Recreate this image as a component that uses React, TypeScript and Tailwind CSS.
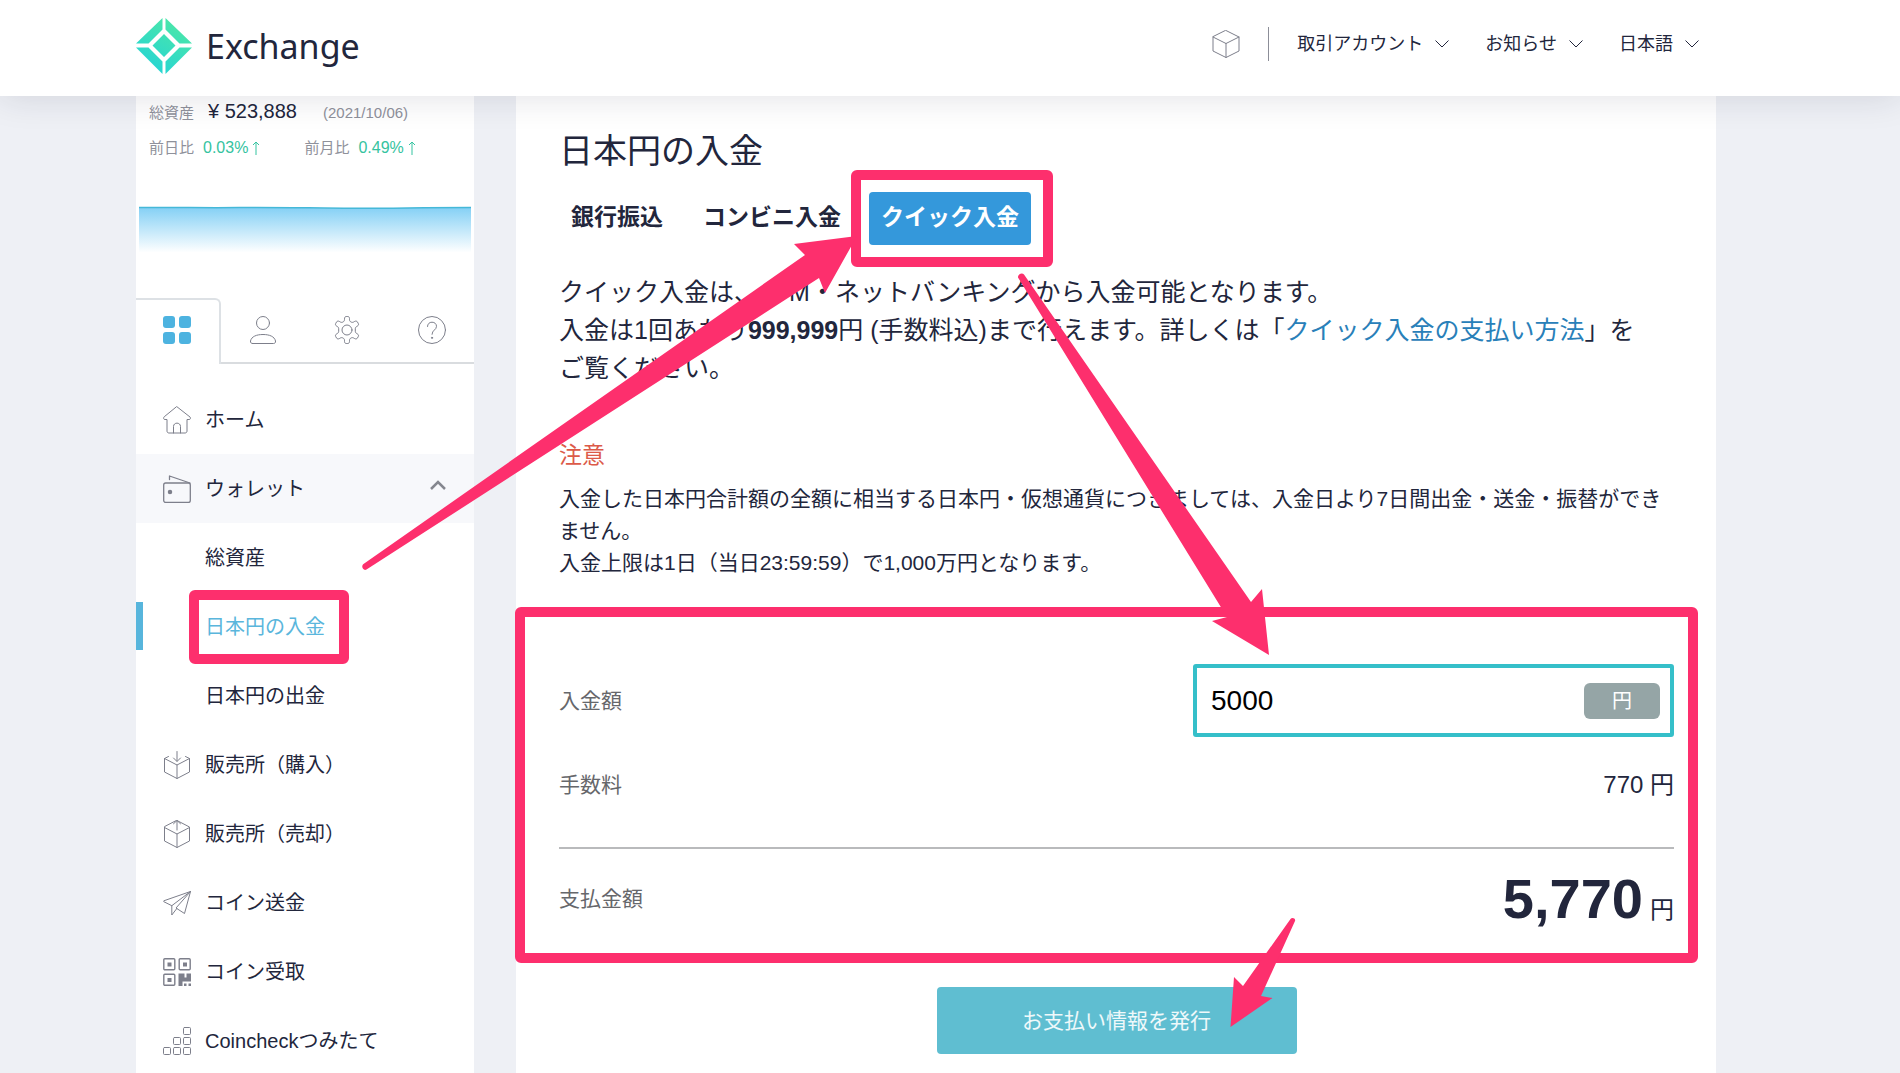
import { useState } from "react";
import type { ReactNode } from "react";

const iconProps = {
  viewBox: "0 0 28 28",
  fill: "none",
  stroke: "currentColor",
  strokeWidth: 1,
  strokeLinecap: "round" as const,
  strokeLinejoin: "round" as const,
  className: "w-7 h-7 shrink-0 text-[#7d7f8b]",
};

function CubeIcon() {
  return (
    <svg {...iconProps}>
      <path d="M14 .5 27 7v14l-13 6.500L1 21V7z" />
      <path d="M1 7l13 6.500L27 7M14 13.500v14" />
    </svg>
  );
}

function GridIcon() {
  return (
    <svg viewBox="0 0 28 28" fill="#4db3e0" className="w-7 h-7">
      <rect x="0" y="0" width="12" height="12" rx="3" />
      <rect x="16" y="0" width="12" height="12" rx="3" />
      <rect x="0" y="16" width="12" height="12" rx="3" />
      <rect x="16" y="16" width="12" height="12" rx="3" />
    </svg>
  );
}

function UserIcon() {
  return (
    <svg {...iconProps}>
      <circle cx="14" cy="7" r="6.500" />
      <path d="M3.500 27.500h21c1.500 0 2.200-1 2-2.500C25.500 20.500 20.500 18.500 14 18.500S2.500 20.500 1.500 25c-.2 1.500.5 2.500 2 2.500z" />
    </svg>
  );
}

function GearIcon() {
  return (
    <svg {...iconProps}>
      <circle cx="14" cy="14" r="5" />
      <path d="M11.500 2.500c0-1.200.7-2 1.700-2h1.600c1 0 1.700.8 1.700 2v1.300c0 1 .6 1.700 1.500 2.200.9.500 1.800.5 2.700 0l1-.6c1-.6 2.200-.3 2.700.5l.9 1.600c.5.9.2 1.900-.8 2.500l-1 .6c-.9.500-1.200 1.400-1.200 2.400v2c0 1 .3 1.900 1.200 2.400l1 .6c1 .6 1.300 1.600.8 2.500l-.9 1.600c-.5.8-1.700 1.100-2.700.5l-1-.6c-.9-.5-1.800-.5-2.700 0-.9.500-1.500 1.200-1.500 2.200v1.300c0 1.200-.7 2-1.700 2h-1.600c-1 0-1.700-.8-1.700-2v-1.300c0-1-.6-1.700-1.500-2.200-.9-.5-1.800-.5-2.700 0l-1 .6c-1 .6-2.200.3-2.700-.5l-.9-1.600c-.5-.9-.2-1.900.8-2.500l1-.6c.9-.5 1.200-1.400 1.200-2.400v-2c0-1-.3-1.900-1.200-2.400l-1-.6c-1-.6-1.300-1.600-.8-2.500l.9-1.600c.5-.8 1.700-1.100 2.700-.5l1 .6c.9.500 1.800.5 2.700 0 .9-.5 1.500-1.200 1.500-2.200z" />
    </svg>
  );
}

function HelpIcon() {
  return (
    <svg {...iconProps}>
      <circle cx="14" cy="14" r="13.500" />
      <path d="M9.500 10.500c0-2.600 1.900-4.300 4.500-4.300s4.500 1.700 4.500 4.100c0 3.700-4.500 3.700-4.500 8" />
      <circle cx="14" cy="21.800" r=".6" fill="currentColor" />
    </svg>
  );
}

function HomeIcon() {
  return (
    <svg {...iconProps}>
      <path d="M14 .8 27 11c.9.900.5 2.500-.8 2.500H24v11.500c0 1.300-.8 2-2 2H6c-1.200 0-2-.7-2-2V13.500H1.800C.5 13.500.1 11.900 1 11z" />
      <path d="M10.500 27v-6.500c0-4.500 7-4.500 7 0V27" />
    </svg>
  );
}

function WalletIcon() {
  return (
    <svg {...iconProps} strokeWidth={1.3}>
      <rect x=".7" y="8" width="26.600" height="19.500" rx="2" />
      <path d="M6.500 4.500V1L27 8" />
      <circle cx="7" cy="17" r="1.600" fill="currentColor" />
    </svg>
  );
}

function BuyIcon() {
  return (
    <svg {...iconProps}>
      <path d="M5.500 5.500 1.500 7.500v13.500L14 27.500 26.500 21V7.500l-4-2" />
      <path d="M1.500 7.500 14 14l12.500-6.500M14 14v13.500M14 .5V10M10.500 7l3.500 3.500L17.500 7" />
    </svg>
  );
}

function SellIcon() {
  return (
    <svg {...iconProps}>
      <path d="M14 .5 26.500 7v14L14 27.500 1.500 21V7z" />
      <path d="M1.500 7.500 14 14l12.500-6.500M14 14v13.500M14 .5V10M10.500 3.800 14 .5l3.500 3.300" />
    </svg>
  );
}

function SendIcon() {
  return (
    <svg {...iconProps}>
      <path d="M27.500 2.500.8 11.800c-.4.200-.4.700 0 .9l8 4L27.500 2.500 21.500 24.500l-8.500-5.500L27.500 2.500" />
      <path d="M8.800 16.700v9.300l5-6.500" />
    </svg>
  );
}

function QrIcon() {
  return (
    <svg {...iconProps} strokeWidth={1.4}>
      <rect x=".8" y=".8" width="11" height="11" rx="1" />
      <rect x="16.200" y=".8" width="11" height="11" rx="1" />
      <rect x=".8" y="16.200" width="11" height="11" rx="1" />
      <path
        fill="currentColor"
        stroke="none"
        d="M4.500 4.500h4v4h-4zM20 4.500h4v4h-4zM4.500 20h4v4h-4zM15.500 15.500h6v4h2v-4H28v8h-8.500V28h-4zM21 25.500h2.500V28H21zM25.500 25.500H28V28h-2.500z"
      />
    </svg>
  );
}

function StepsIcon() {
  return (
    <svg {...iconProps}>
      <rect x="20.500" y=".5" width="7" height="7" rx="1" />
      <rect x="10.500" y="10.500" width="7" height="7" rx="1" />
      <rect x="20.500" y="10.500" width="7" height="7" rx="1" />
      <rect x=".5" y="20.500" width="7" height="7" rx="1" />
      <rect x="10.500" y="20.500" width="7" height="7" rx="1" />
      <rect x="20.500" y="20.500" width="7" height="7" rx="1" />
    </svg>
  );
}

function Logo() {
  return (
    <svg viewBox="0 0 56 56" className="w-14 h-14">
      <defs>
        <linearGradient id="logo" x1="0.800" y1="0" x2="0.200" y2="1">
          <stop offset="0" stopColor="#4fe8a4" />
          <stop offset="1" stopColor="#22d3d8" />
        </linearGradient>
      </defs>
      <path
        fill="url(#logo)"
        d="M26.500 0v11.500L12.500 25.500H0zM29.500 0v11.500L43.500 25.500H56zM0 29.500h12.500L26.500 43.500V56zM56 29.500H43.500L29.500 43.500V56zM28 16 39.500 27.500 28 39 16.500 27.500z"
      />
    </svg>
  );
}

function HeaderMenu({ label }: { label: string }) {
  return (
    <button type="button" className="flex items-center gap-3 text-lg">
      {label}
      <svg viewBox="0 0 14 8" fill="none" stroke="currentColor" className="w-3.5 h-2">
        <path d="M.5.5 7 7 13.500.5" />
      </svg>
    </button>
  );
}

const tabs = ["銀行振込", "コンビニ入金", "クイック入金"];

const menu: { label: string; icon?: ReactNode; open?: boolean; active?: boolean }[] = [
  { label: "ホーム", icon: <HomeIcon /> },
  { label: "ウォレット", icon: <WalletIcon />, open: true },
  { label: "総資産" },
  { label: "日本円の入金", active: true },
  { label: "日本円の出金" },
  { label: "販売所（購入）", icon: <BuyIcon /> },
  { label: "販売所（売却）", icon: <SellIcon /> },
  { label: "コイン送金", icon: <SendIcon /> },
  { label: "コイン受取", icon: <QrIcon /> },
  { label: "Coincheckつみたて", icon: <StepsIcon /> },
];

function Change({ label, value }: { label: string; value: string }) {
  return (
    <p className="flex gap-[9px]">
      {label}
      <span className="flex items-center gap-1 text-base leading-6 text-[#35c3a0]">
        {value}
        <svg viewBox="0 0 8 14" fill="none" stroke="currentColor" className="h-3.5 w-2">
          <path d="M4 14V1M1 4l3-3 3 3" />
        </svg>
      </span>
    </p>
  );
}

function Sidebar() {
  return (
    <aside className="w-[338px] shrink-0 bg-white">
      <div className="pl-[13px] pt-[3px] text-[15px] leading-6 text-[#8f919b]">
        <p className="flex items-baseline">
          総資産
          <span className="ml-[14px] mr-[26px] text-xl leading-6 text-[#22263c]">¥ 523,888</span>
          (2021/10/06)
        </p>
        <div className="mt-[11px] flex gap-11">
          <Change label="前日比" value="0.03%" />
          <Change label="前月比" value="0.49%" />
        </div>
      </div>

      <svg viewBox="0 0 332 48" preserveAspectRatio="none" className="mx-[3px] mt-[45px] h-12 w-[332px]">
        <defs>
          <linearGradient id="assets" x1="0" y1="0" x2="0" y2="1">
            <stop offset="0" stopColor="#84d0f5" />
            <stop offset="1" stopColor="#ffffff" />
          </linearGradient>
        </defs>
        <path fill="url(#assets)" d="M0 2.500C40 2 60 3 100 2.500S180 3.300 220 3.300s60-.8 112-.8v45H0z" />
        <path fill="none" stroke="#45b8d8" strokeWidth="1.500" d="M0 2.500C40 2 60 3 100 2.500S180 3.300 220 3.300s60-.8 112-.8" />
      </svg>

      <div className="mt-[45px] grid h-[66px] grid-cols-4">
        <button type="button" aria-label="メニュー" className="flex items-center justify-center rounded-tr-md border-r-2 border-t-2 border-[#dde1e5] pb-1">
          <GridIcon />
        </button>
        <button type="button" aria-label="アカウント" className="flex items-center justify-center border-b-2 border-[#d9dcdf]">
          <UserIcon />
        </button>
        <button type="button" aria-label="設定" className="flex items-center justify-center border-b-2 border-[#d9dcdf]">
          <GearIcon />
        </button>
        <button type="button" aria-label="ヘルプ" className="flex items-center justify-center border-b-2 border-[#d9dcdf]">
          <HelpIcon />
        </button>
      </div>

      <nav className="mt-[21px] text-xl leading-7">
        {menu.map((item) => (
          <a
            key={item.label}
            href="#"
            className={`relative flex h-[69px] items-center gap-[14px] pl-[27px] pr-7 ${item.open ? "bg-[#f7f8fb]" : ""} ${item.active ? "text-[#5ab6dc]" : ""}`}
          >
            {item.active && <span className="absolute left-0 top-[10px] h-12 w-[7px] bg-[#57b5dc]" />}
            {item.icon ?? <span className="w-7" />}
            <span className="relative">
              {item.label}
              {item.active && <Highlight className="-inset-y-[23px] -left-4 -right-6" />}
            </span>
            {item.open && (
              <svg viewBox="0 0 16 10" fill="none" stroke="#85878f" strokeWidth="2.500" className="mb-2 ml-auto h-2.5 w-4">
                <path d="M1 9l7-7 7 7" />
              </svg>
            )}
          </a>
        ))}
      </nav>
    </aside>
  );
}

function Highlight({ className }: { className: string }) {
  return <span className={`pointer-events-none absolute rounded-md border-[10px] border-[#fd2f6d] ${className}`} />;
}

function Arrows() {
  return (
    <svg viewBox="136 0 1580 1073" fill="#fd2f6d" className="pointer-events-none absolute left-[136px] top-0 z-20 h-[1073px] w-[1580px]">
      <path d="M363.500 564 805 255l-11-11 63-8-32 57-6-15L366.500 569.500c-3 2-6-3-3-5.500z" />
      <path d="M1018 277.500 1227 617l-15 4 57 34-7-66-11 13-227-327.500c-2-2.500-6.500 0-6 3z" />
      <path d="M1290.500 919 1243 986l-9-9-3.500 50 42-29-11.500-2 34-75c1-2.500-3-4-4.500-2z" />
    </svg>
  );
}

function DepositForm() {
  const [amount, setAmount] = useState("5000");
  const fee = 770;
  const total = Number(amount) + fee;

  return (
    <form onSubmit={(e) => e.preventDefault()}>
      <div className="relative mt-7 pb-8 pt-[57px] text-[21px] text-[#66676b]">
        <Highlight className="inset-y-0 -left-11 -right-6" />
        <div className="flex items-center justify-between">
          <label htmlFor="amount">入金額</label>
          <div className="flex h-[73px] w-[481px] items-center rounded-[3px] border-4 border-[#35bfc9] pl-3.5 pr-2.5">
            <input
              id="amount"
              inputMode="numeric"
              value={amount}
              onChange={(e) => setAmount(e.target.value)}
              className="min-w-0 flex-1 text-[28px] text-black outline-none"
            />
            <span className="flex h-9 w-[76px] items-center justify-center rounded-md bg-[#95a5a6] text-xl text-white">円</span>
          </div>
        </div>
        <div className="mt-[29px] flex h-[38px] items-center justify-between">
          <span>手数料</span>
          <span className="text-2xl text-[#22263c]">{fee} 円</span>
        </div>
        <hr className="mt-[43px] border-t-2 border-[#b9babc]" />
        <div className="mt-[18px] flex h-16 items-center justify-between">
          <span>支払金額</span>
          <span className="flex items-baseline gap-[7px] text-2xl leading-none text-[#22263c]">
            <strong className="text-[56px] leading-none">{total.toLocaleString("en-US")}</strong>円
          </span>
        </div>
      </div>
      <button type="submit" className="mx-auto mt-6 block h-[67px] w-[360px] rounded bg-[#5fbed1] text-[21px] text-white/90">
        お支払い情報を発行
      </button>
    </form>
  );
}

export default function App() {
  return (
    <div className="relative flex h-screen flex-col overflow-hidden bg-[#eef0f5] font-['Liberation_Sans','Noto_Sans_CJK_JP',sans-serif] text-[#22263c]">
      <header className="relative z-10 flex h-24 shrink-0 items-center justify-between bg-white pb-1 pl-[136px] pr-[201px] shadow-[0_0_36px_rgba(30,30,60,0.14)]">
        <a href="#" className="flex items-center gap-3.5">
          <Logo />
          <span className="font-['Noto_Sans',sans-serif] text-[34px] leading-[56px]">Exchange</span>
        </a>
        <div className="mb-1 flex items-center gap-9">
          <div className="flex items-center gap-7">
            <CubeIcon />
            <span className="h-[34px] w-px bg-[#8c8e98]" />
            <HeaderMenu label="取引アカウント" />
          </div>
          <HeaderMenu label="お知らせ" />
          <HeaderMenu label="日本語" />
        </div>
      </header>

      <div className="flex flex-1 gap-[42px] pl-[136px] pr-[184px]">
        <Sidebar />
        <main className="flex-1 bg-white pl-[43px] pr-[42px] pt-[31px]">
          <h1 className="text-[34px] leading-[48px]">日本円の入金</h1>

          <div role="tablist" className="mt-[17px] flex gap-4">
            {tabs.map((tab, i) => (
              <button
                key={tab}
                type="button"
                role="tab"
                aria-selected={i === 2}
                className={`relative h-[53px] rounded px-3 pb-1 text-[23px] leading-8 font-bold ${i === 2 ? "bg-[#3498db] text-white" : ""}`}
              >
                {tab}
                {i === 2 && <Highlight className="-inset-y-[22px] -left-[18px] -right-[22px]" />}
              </button>
            ))}
          </div>

          <p className="mt-7 text-[25px] leading-[38px] whitespace-nowrap">
            クイック入金は、ATM・ネットバンキングから入金可能となります。
            <br />
            入金は1回あたり<strong>999,999</strong>円 (手数料込)まで行えます。詳しくは「
            <a href="#" className="text-[#2980b9]">クイック入金の支払い方法</a>」を
            <br />
            ご覧ください。
          </p>

          <h2 className="mt-[52px] text-[23px] leading-8 text-[#dc5a49]">注意</h2>
          <p className="mt-3 text-[21px] leading-8">
            入金した日本円合計額の全額に相当する日本円・仮想通貨につきましては、入金日より7日間出金・送金・振替ができません。
            <br />
            入金上限は1日（当日23:59:59）で1,000万円となります。
          </p>

          <DepositForm />
        </main>
      </div>

      <Arrows />
    </div>
  );
}
